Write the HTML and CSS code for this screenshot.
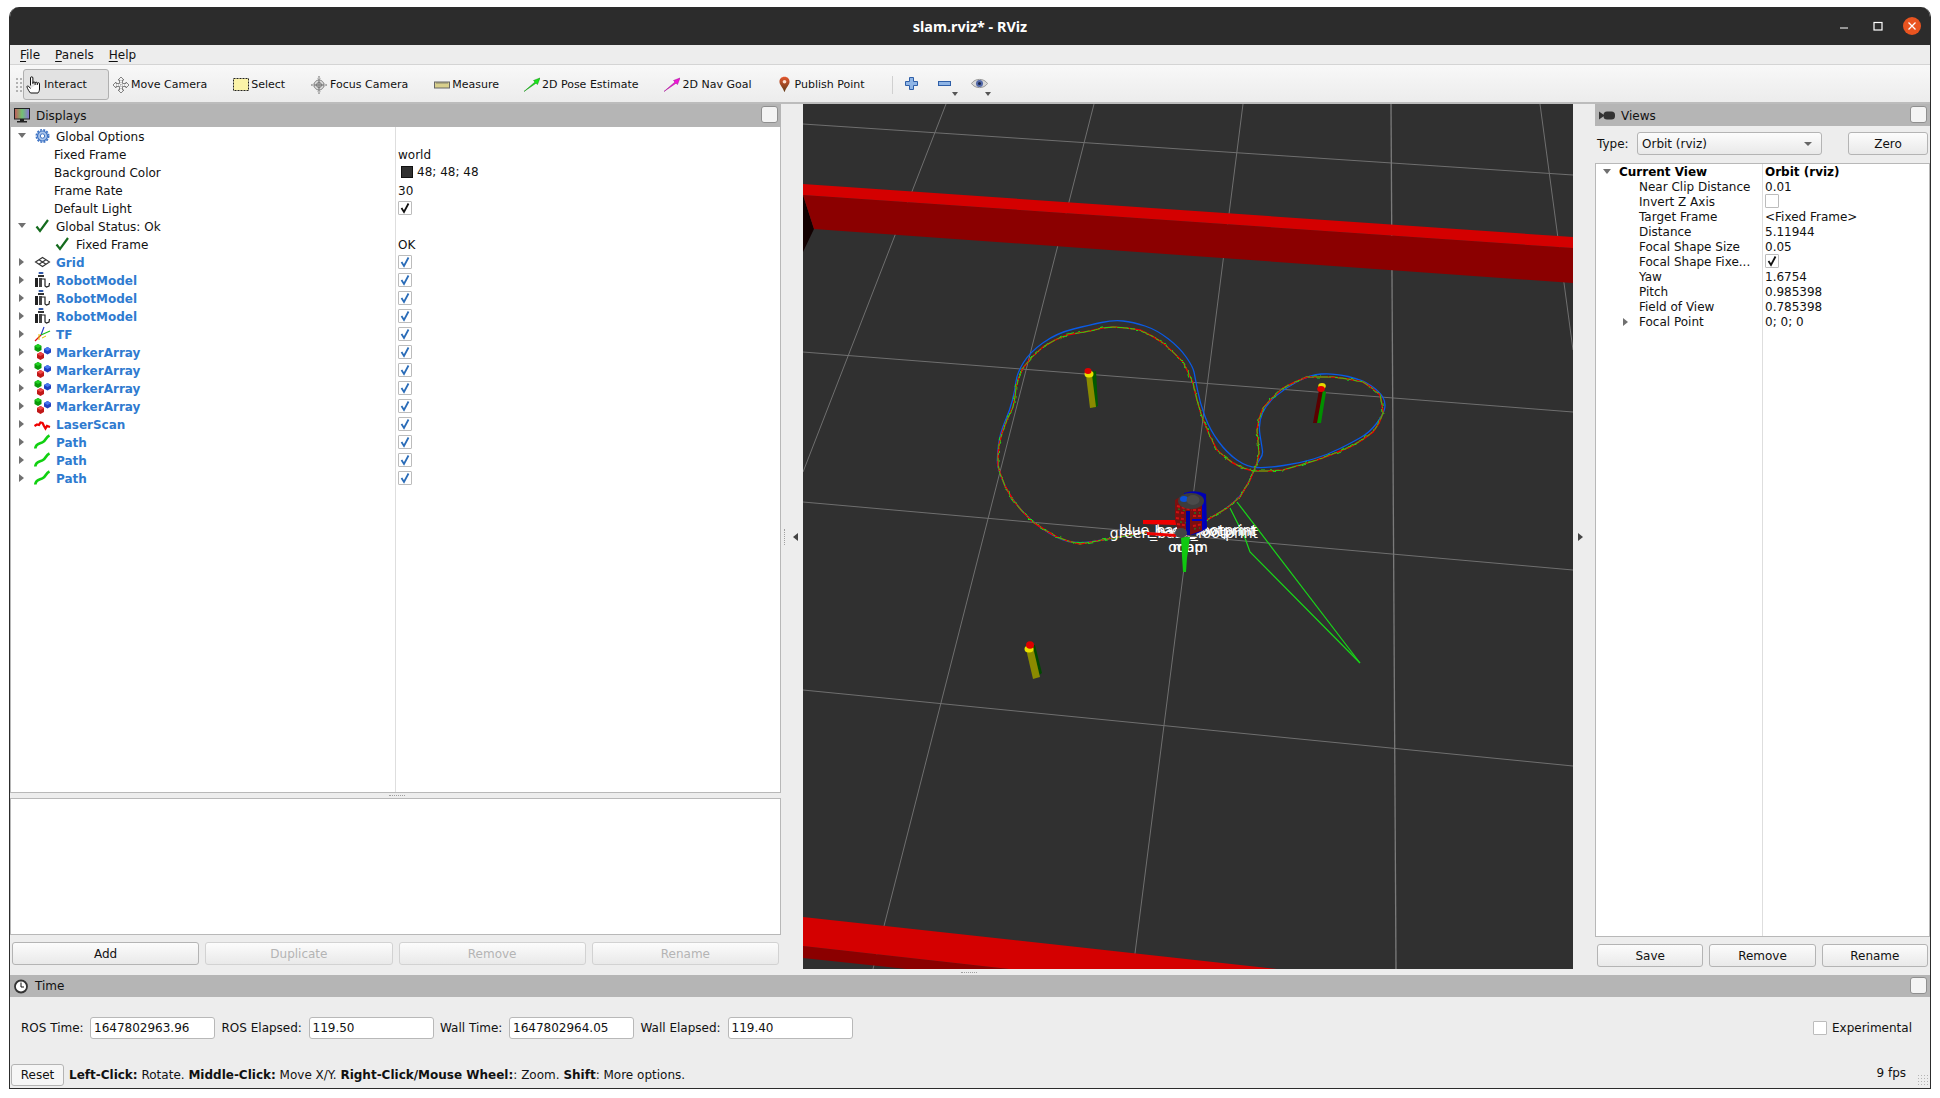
FILE: index.html
```html
<!DOCTYPE html>
<html lang="en">
<head>
<meta charset="utf-8">
<title>slam.rviz* - RViz</title>
<link rel="stylesheet" href="styles.css">
</head>
<body>
<svg class="defs" width="0" height="0" aria-hidden="true">
  <defs>
    <symbol id="i-gear" viewBox="0 0 17 14">
      <circle cx="8.5" cy="7" r="5" fill="#a9c4ea" stroke="#3f74c4" stroke-width="1.2"/>
      <circle cx="8.5" cy="7" r="6.2" fill="none" stroke="#3f74c4" stroke-width="1.6" stroke-dasharray="2 1.25"/>
      <circle cx="8.5" cy="7" r="2.2" fill="#fff" stroke="#3f74c4"/>
    </symbol>
    <symbol id="i-ok" viewBox="0 0 17 14">
      <path d="M2.5 7.5 L6 12 L14 1" fill="none" stroke="#156b1e" stroke-width="2.2"/>
    </symbol>
    <symbol id="i-grid" viewBox="0 0 17 14">
      <path d="M1.5 7 L8.5 2.5 L15.5 7 L8.5 11.5Z M5 4.8 L12 9.2 M12 4.8 L5 9.2" fill="#fff" stroke="#333" stroke-width="1.1"/>
    </symbol>
    <symbol id="i-robot" viewBox="0 0 17 16">
      <rect x="4.5" y="0" width="5" height="2" rx="1" fill="#3058a8"/>
      <rect x="4" y="3" width="6" height="2" fill="#333"/>
      <rect x="1" y="6" width="3" height="9" fill="#222"/>
      <rect x="5" y="6" width="3" height="9" fill="#444"/>
      <path d="M8 7 L11 7 L11 14 L12.5 15 L15 14 L15.5 11" fill="none" stroke="#222" stroke-width="1.2"/>
    </symbol>
    <symbol id="i-tf" viewBox="0 0 17 16">
      <path d="M7 9 L10 1" stroke="#2238c8" stroke-width="1.2" fill="none"/>
      <path d="M7 9 L16 5" stroke="#18c018" stroke-width="1.2" fill="none"/>
      <path d="M7 9 L1 15" stroke="#e01010" stroke-width="1.3" fill="none"/>
      <path d="M5 8 L5 14 M8 12 L12 10" stroke="#e0c000" stroke-width="1" fill="none"/>
    </symbol>
    <symbol id="i-marker" viewBox="0 0 17 16">
      <path d="M4 0 L7.5 2 V6 L4 8 L.5 6 V2Z" fill="#0a9a0a"/><path d="M.5 2 L4 0 L7.5 2 L4 4Z" fill="#22d022"/>
      <path d="M13.5 3 L17 5 V8.5 L13.5 10.5 L10 8.5 V5Z" fill="#2040c0"/><path d="M10 5 L13.5 3 L17 5 L13.5 7Z" fill="#4a78f0"/>
      <path d="M6.500 8 L10 10 V14 L6.500 16 L3 14 V10Z" fill="#c01818"/><path d="M3 10 L6.500 8 L10 10 L6.500 12Z" fill="#f04848"/>
    </symbol>
    <symbol id="i-laser" viewBox="0 0 17 14">
      <path d="M.5 9 L3 7.500 L5 8 L6.500 5.500 L8.500 6 L10 9 L11.500 11.500 L13 9 L16 10" fill="none" stroke="#ee0000" stroke-width="2.300"/>
    </symbol>
    <symbol id="i-path" viewBox="0 0 17 16">
      <path d="M1.300 14.500 C1.800 9 6 10 9 8 C12 6 12 3 15.500 1.500" fill="none" stroke="#10d010" stroke-width="2.700"/>
    </symbol>
    <symbol id="i-check" viewBox="0 0 12 12">
      <path d="M2.500 6 L5 10 L9.500 1.500" fill="none" stroke="currentColor" stroke-width="1.800"/>
    </symbol>
    <linearGradient id="g-screen" x1="0" x2="1" y1="0" y2="0">
      <stop offset="0" stop-color="#c65a5a"/><stop offset=".5" stop-color="#72c272"/><stop offset="1" stop-color="#8a74d6"/>
    </linearGradient>
    <linearGradient id="g-pin" x1="0" x2="0" y1="0" y2="1">
      <stop offset="0" stop-color="#e4572e"/><stop offset="1" stop-color="#5d3a18"/>
    </linearGradient>
    <filter id="jag" filterUnits="userSpaceOnUse" x="960" y="280" width="460" height="300">
      <feTurbulence type="fractalNoise" baseFrequency="0.22" numOctaves="1" seed="4"/>
      <feDisplacementMap in="SourceGraphic" scale="5" xChannelSelector="R" yChannelSelector="G"/>
    </filter>
    <path id="gt" d="M1147 532 L1113 538 L1097 541 L1080 544 L1068 541 L1057 537 L1045 530 L1033 522 L1022 511 L1013 500 L1005 486 L1000 473 L998 465 L998 457 L999 445 L1002 433 L1007 420 L1013 407 L1015 397 L1016 387 L1019 377 L1023 368 L1032 357 L1043 347 L1055 340 L1067 335 L1078 333 L1090 331 L1102 328 L1113 327 L1127 328 L1140 330 L1152 336 L1163 343 L1173 352 L1183 362 L1188 372 L1193 383 L1197 400 L1202 417 L1209 434 L1217 450 L1225 457 L1233 463 L1243 468 L1253 471 L1268 471 L1283 470 L1300 465 L1317 460 L1333 454 L1350 447 L1362 440 L1373 432 L1379 423 L1383 413 L1382 404 L1380 395 L1372 388 L1363 382 L1348 379 L1333 377 L1320 377 L1307 377 L1295 382 L1283 388 L1272 398 L1263 408 L1259 419 L1257 430 L1258 442 L1259 453 L1257 463 L1250 480 L1240 497 L1227 508 L1207 520 L1200 524"/>
  </defs>
</svg>

<div class="window">
  <header class="titlebar">
    <span class="title">slam.rviz* - RViz</span>
    <div class="winctl">
      <svg class="ctl min" width="12" height="12" viewBox="0 0 12 12"><path d="M0 8 H8" stroke="#fff" stroke-width="1"/></svg>
      <svg class="ctl" width="12" height="12" viewBox="0 0 12 12"><rect x="1" y="2.500" width="8" height="7.500" fill="none" stroke="#fff" stroke-width="1.200"/></svg>
      <svg class="ctl" width="18" height="18" viewBox="0 0 18 18"><circle cx="9" cy="9" r="9" fill="#e95420"/><path d="M5.500 5.500 L12.500 12.500 M12.500 5.500 L5.500 12.500" stroke="#fff" stroke-width="1.300"/></svg>
    </div>
  </header>

  <nav class="menubar">
    <span class="menu"><u>F</u>ile</span>
    <span class="menu"><u>P</u>anels</span>
    <span class="menu"><u>H</u>elp</span>
  </nav>

  <div class="toolbar">
    <span class="handle"></span>
    <div class="tool active">
      <svg class="ti" viewBox="0 0 16 18"><path d="M4.500 9.500 V2 a1.200 1.200 0 0 1 2.400 0 V8 M6.900 7 a1.100 1.100 0 0 1 2.200 0 V9 M9.100 7.300 a1.100 1.100 0 0 1 2.200 0 V9 M11.300 7.800 a1.100 1.100 0 0 1 2.200 0 V13 c0 2 -.8 3 -1.500 4 H4.500 C3.500 16 1.500 13 1 11 c-.2 -1 .8 -1.500 1.500 -.8 L4.500 12.500" fill="#fff" stroke="#111" stroke-width="1"/></svg>
      <span>Interact</span>
    </div>
    <div class="tool">
      <svg class="ti" viewBox="0 0 16 18"><path d="M8 1 L11 4 H9.500 V7.500 H13 V6 L16 9 L13 12 V10.500 H9.500 V14 H11 L8 17 L5 14 H6.500 V10.500 H3 V12 L0 9 L3 6 V7.500 H6.500 V4 H5Z" fill="#f4f4f4" stroke="#666" stroke-width=".8"/><path d="M3 9 H13 M8 4 V14" stroke="#888" stroke-width=".8" stroke-dasharray="1 1"/></svg>
      <span>Move Camera</span>
    </div>
    <div class="tool">
      <svg class="ti" viewBox="0 0 16 18"><rect x=".5" y="2.500" width="15" height="12" fill="#fbf3a8" stroke="#222" stroke-dasharray="2 1"/></svg>
      <span>Select</span>
    </div>
    <div class="tool">
      <svg class="ti" viewBox="0 0 16 18"><circle cx="8" cy="9" r="5" fill="#ddd" stroke="#888"/><path d="M8 0 V18 M0 9 H16" stroke="#888" stroke-width="1.400"/><circle cx="8" cy="9" r="2.500" fill="none" stroke="#777"/><path d="M8 0 L10 3 H6Z M8 18 L10 15 H6Z M0 9 L3 7 V11Z M16 9 L13 7 V11Z" fill="#bbb"/></svg>
      <span class="sp">Focus Camera</span>
    </div>
    <div class="tool tight">
      <svg class="ti" viewBox="0 0 16 18"><rect x=".5" y="6" width="15" height="6" fill="#d8cf8c" stroke="#666"/><path d="M3 6 V8 M5 6 V8 M7 6 V8 M9 6 V8 M11 6 V8 M13 6 V8" stroke="#666" stroke-width=".7"/></svg>
      <span>Measure</span>
    </div>
    <div class="tool">
      <svg class="ti" viewBox="0 0 16 18"><path d="M0 15.500 L11 6 L9.500 4.500 L16 2 L13.500 8.500 L12 7.200 Z" fill="#19e619" stroke="#118a11" stroke-width=".5"/></svg>
      <span>2D Pose Estimate</span>
    </div>
    <div class="tool wide">
      <svg class="ti" viewBox="0 0 16 18"><path d="M0 15.500 L11 6 L9.500 4.500 L16 2 L13.500 8.500 L12 7.200 Z" fill="#f014d8" stroke="#a01090" stroke-width=".5"/></svg>
      <span>2D Nav Goal</span>
    </div>
    <div class="tool">
      <svg class="tp" viewBox="0 0 12 17"><path d="M6 0 C2.500 0 .5 2.500 .5 5.500 C.5 9 4 11 6 17 C8 11 11.500 9 11.500 5.500 C11.500 2.500 9.500 0 6 0Z" fill="url(#g-pin)"/><circle cx="6" cy="5.500" r="2" fill="#fbe0d0"/></svg>
      <span>Publish Point</span>
    </div>
    <span class="tsep"></span>
    <div class="vbtn">
      <svg width="13" height="13" viewBox="0 0 13 13"><path d="M4.500 .5 H8.500 V4.500 H12.500 V8.500 H8.500 V12.500 H4.500 V8.500 H.5 V4.500 H4.500Z" fill="#8fb5e6" stroke="#2f5fa8"/></svg>
    </div>
    <div class="vbtn">
      <svg width="13" height="13" viewBox="0 0 13 13"><rect x=".5" y="4.500" width="12" height="4" fill="#8fb5e6" stroke="#2f5fa8"/></svg>
      <i class="drop"></i>
    </div>
    <div class="vbtn">
      <svg width="17" height="13" viewBox="0 0 17 13"><path d="M.5 6.500 C4 1 13 1 16.500 6.500 C13 12 4 12 .5 6.500Z" fill="#d8d8d8" stroke="#999"/><circle cx="8.500" cy="6.500" r="3.500" fill="#5268a8"/><circle cx="8.500" cy="6.500" r="1.500" fill="#1c2848"/></svg>
      <i class="drop"></i>
    </div>
  </div>

  <div class="workspace">
    <section class="dock left">
      <div class="docktitle">
        <svg class="dicon" viewBox="0 0 16 15"><rect x=".5" y=".5" width="15" height="10.500" fill="url(#g-screen)" stroke="#222"/><path d="M6 11 H10 V13 H13 V14.500 H3 V13 H6Z" fill="#222"/></svg>
        <span>Displays</span>
        <span class="floatbox"></span>
      </div>
      <div class="tree displays">
        <div class="row"><div class="name"><i class="tw down"></i><svg class="ic"><use href="#i-gear"/></svg><span>Global Options</span></div><div class="val"></div></div>
        <div class="row"><div class="name child">Fixed Frame</div><div class="val">world</div></div>
        <div class="row"><div class="name child">Background Color</div><div class="val"><i class="swatch"></i><span class="up">48; 48; 48</span></div></div>
        <div class="row"><div class="name child">Frame Rate</div><div class="val">30</div></div>
        <div class="row"><div class="name child">Default Light</div><div class="val"><span class="cb"><svg class="ck"><use href="#i-check"/></svg></span></div></div>
        <div class="row"><div class="name"><i class="tw down"></i><svg class="ic"><use href="#i-ok"/></svg><span>Global Status: Ok</span></div><div class="val"></div></div>
        <div class="row"><div class="name child"><svg class="ic"><use href="#i-ok"/></svg><span>Fixed Frame</span></div><div class="val">OK</div></div>
        <div class="row on"><div class="name"><i class="tw"></i><svg class="ic"><use href="#i-grid"/></svg><span>Grid</span></div><div class="val"><span class="cb"><svg class="ck"><use href="#i-check"/></svg></span></div></div>
        <div class="row on"><div class="name"><i class="tw"></i><svg class="ic"><use href="#i-robot"/></svg><span>RobotModel</span></div><div class="val"><span class="cb"><svg class="ck"><use href="#i-check"/></svg></span></div></div>
        <div class="row on"><div class="name"><i class="tw"></i><svg class="ic"><use href="#i-robot"/></svg><span>RobotModel</span></div><div class="val"><span class="cb"><svg class="ck"><use href="#i-check"/></svg></span></div></div>
        <div class="row on"><div class="name"><i class="tw"></i><svg class="ic"><use href="#i-robot"/></svg><span>RobotModel</span></div><div class="val"><span class="cb"><svg class="ck"><use href="#i-check"/></svg></span></div></div>
        <div class="row on"><div class="name"><i class="tw"></i><svg class="ic"><use href="#i-tf"/></svg><span>TF</span></div><div class="val"><span class="cb"><svg class="ck"><use href="#i-check"/></svg></span></div></div>
        <div class="row on"><div class="name"><i class="tw"></i><svg class="ic"><use href="#i-marker"/></svg><span>MarkerArray</span></div><div class="val"><span class="cb"><svg class="ck"><use href="#i-check"/></svg></span></div></div>
        <div class="row on"><div class="name"><i class="tw"></i><svg class="ic"><use href="#i-marker"/></svg><span>MarkerArray</span></div><div class="val"><span class="cb"><svg class="ck"><use href="#i-check"/></svg></span></div></div>
        <div class="row on"><div class="name"><i class="tw"></i><svg class="ic"><use href="#i-marker"/></svg><span>MarkerArray</span></div><div class="val"><span class="cb"><svg class="ck"><use href="#i-check"/></svg></span></div></div>
        <div class="row on"><div class="name"><i class="tw"></i><svg class="ic"><use href="#i-marker"/></svg><span>MarkerArray</span></div><div class="val"><span class="cb"><svg class="ck"><use href="#i-check"/></svg></span></div></div>
        <div class="row on"><div class="name"><i class="tw"></i><svg class="ic"><use href="#i-laser"/></svg><span>LaserScan</span></div><div class="val"><span class="cb"><svg class="ck"><use href="#i-check"/></svg></span></div></div>
        <div class="row on"><div class="name"><i class="tw"></i><svg class="ic"><use href="#i-path"/></svg><span>Path</span></div><div class="val"><span class="cb"><svg class="ck"><use href="#i-check"/></svg></span></div></div>
        <div class="row on"><div class="name"><i class="tw"></i><svg class="ic"><use href="#i-path"/></svg><span>Path</span></div><div class="val"><span class="cb"><svg class="ck"><use href="#i-check"/></svg></span></div></div>
        <div class="row on"><div class="name"><i class="tw"></i><svg class="ic"><use href="#i-path"/></svg><span>Path</span></div><div class="val"><span class="cb"><svg class="ck"><use href="#i-check"/></svg></span></div></div>
      </div>
      <div class="vsplit"><i class="dots"></i></div>
      <div class="desc"></div>
      <div class="btnrow">
        <button class="btn">Add</button>
        <button class="btn off">Duplicate</button>
        <button class="btn off">Remove</button>
        <button class="btn off">Rename</button>
      </div>
    </section>

    <div class="hsplit l"><i class="grip"></i><i class="larr"></i></div>

    <div class="scenecol">
      <svg class="scene" width="770" height="865" viewBox="803 104 770 865">
        <rect x="803" y="104" width="770" height="865" fill="#303030"/>
        <g fill="none" stroke="#6f6f6f" stroke-width="1">
          <path d="M803 124 L1573 175"/>
          <path d="M803 352 L1573 412"/>
          <path d="M803 502 L1573 570"/>
          <path d="M803 690 L1573 766"/>
          <path d="M946 104 L803 472"/>
          <path d="M1094 104 L873 969"/>
          <path d="M1243 104 L1133 969"/>
          <path d="M1540 104 L1573 350"/>
          <path d="M1391 104 L1396 969" stroke="#7a7a7a" stroke-width="1.300"/>
        </g>
        <polygon points="803,195 814,229 803,252" fill="#120000"/>
        <polygon points="803,195 1573,248 1573,283 814,229" fill="#8b0000"/>
        <polygon points="803,184 1573,237 1573,248 803,195" fill="#d40000"/>
        <polygon points="803,946 1009,969 907,969 803,958" fill="#8b0000"/>
        <polygon points="803,917 1277,969 1009,969 803,946" fill="#d40000"/>

        <g class="traj">
          <path stroke="#0a5ae6" d="M1147 532 Q1113 538 1096.500 541 Q1080 544 1068.500 541.500 Q1057 539 1043.500 529.500 Q1030 520 1020 508.500 Q1010 497 1004 483.500 Q998 470 997.500 463.500 Q997 457 998.500 445 Q1000 433 1005 421.500 Q1010 410 1012.500 400 Q1015 390 1016 381.500 Q1017 373 1023.500 362.500 Q1030 352 1043.500 342.500 Q1057 333 1073.500 329 Q1090 325 1101.500 322.500 Q1113 320 1123 321 Q1133 322 1145 326 Q1157 330 1168.500 339 Q1180 348 1186.500 357.500 Q1193 367 1194 372 Q1195 377 1197.500 390 Q1200 403 1205 416.500 Q1210 430 1218.500 441.500 Q1227 453 1237 460 Q1247 467 1257 467.500 Q1267 468 1283.500 465.500 Q1300 463 1313.500 459 Q1327 455 1340 448.500 Q1353 442 1361.500 437 Q1370 432 1376.500 423.500 Q1383 415 1384.500 409 Q1386 403 1383 397.500 Q1380 392 1371.500 386 Q1363 380 1348 376.500 Q1333 373 1321.500 374 Q1310 375 1298.500 381 Q1287 387 1277 395 Q1267 403 1262.500 413 Q1258 423 1260 435 Q1262 447 1262.500 451 Q1263 455 1260 459 Q1257 463 1253.500 471.500 Q1250 480 1245 488.500 Q1240 497 1233.500 502.500 Q1227 508 1217 514 Q1207 520 1200 524"/>
          <use href="#gt" class="redline" stroke="#ee0000"/>
          <use href="#gt" class="greenline" stroke="#18e018" filter="url(#jag)"/>
        </g>
        <g fill="none" stroke="#18d818" stroke-width="1.200">
          <path d="M1237 502 L1360 663"/>
          <path d="M1230 508 L1237 522 L1245 538 L1250 552 L1360 663"/>
        </g>

        <g>
          <polygon points="1090,372 1096,371 1098,406 1093,408" fill="#005a00"/>
          <polygon points="1086,375 1092,375 1096,407 1090,408" fill="#8a8a00"/>
          <ellipse cx="1089" cy="374" rx="4.500" ry="3.500" fill="#e8e000"/>
          <ellipse cx="1088" cy="371" rx="3.500" ry="3" fill="#dd0000"/>
        </g>
        <g>
          <polygon points="1322,390 1326,392 1321,423 1316,423" fill="#009000"/>
          <polygon points="1319,390 1323,390 1317,423 1313,423" fill="#5a0000"/>
          <ellipse cx="1322" cy="386" rx="3.800" ry="3" fill="#e8d800"/>
          <ellipse cx="1321" cy="389" rx="3.800" ry="3" fill="#dd0000"/>
        </g>
        <g>
          <polygon points="1032,645 1035,645 1042,673 1038,676" fill="#004800"/>
          <polygon points="1026,649 1033,647 1040,677 1033,679" fill="#8a8a00"/>
          <ellipse cx="1029" cy="649" rx="4.500" ry="3.500" fill="#e8e000"/>
          <ellipse cx="1030" cy="645" rx="4" ry="3.800" fill="#dd0000"/>
        </g>

        <g class="labels">
          <text x="1184" y="538">green_base_footprint</text>
          <text x="1188" y="535">blue_base_footprint</text>
          <text x="1205" y="536">base_footprint</text>
          <text x="1188" y="552">odom</text>
          <text x="1188" y="552">map</text>
        </g>

        <g>
          <polygon points="1143,520 1176,520 1176,525 1143,524" fill="#ee0000"/>
          <polygon points="1147,532 1176,534 1176,537 1147,535" fill="#ee0000"/>
          <polygon points="1181,537 1190,537 1187,558 1186,572 1183,572 1182,556" fill="#10c810"/>
          <path d="M1184 493 Q1195 489 1206 494 L1207 528 Q1196 536 1187 535Z" fill="#0000b4"/>
          <path d="M1175 500 Q1178 497 1184 497 L1203 504 L1203 530 L1190 535 L1178 532 L1175 520Z" fill="#7a1010"/>
          <path d="M1177 506 L1192 510 M1176 512 L1190 514 M1176 518 L1190 520 M1177 524 L1190 526 M1178 529 L1188 531 M1193 510 L1202 510 M1193 516 L1203 516 M1193 526 L1203 524" stroke="#d01010" stroke-width="2" stroke-dasharray="3 2" fill="none"/>
          <path d="M1178 509 L1186 511 M1180 522 L1188 523 M1194 513 L1200 513 M1194 529 L1200 528" stroke="#2a7020" stroke-width="1.300" stroke-dasharray="2 3" fill="none"/>
          <path d="M1192 520 L1205 520 M1203 503 L1203 530" stroke="#0000c0" stroke-width="2" fill="none"/>
          <rect x="1186" y="511" width="4" height="24" fill="#0000a0"/>
          <ellipse cx="1191" cy="501" rx="13" ry="8" fill="#3c3c3c"/>
          <ellipse cx="1184" cy="499" rx="4" ry="3" fill="#0a50d8"/>
          <ellipse cx="1193" cy="500" rx="6.500" ry="5" fill="#4a4a4a"/>
          <ellipse cx="1181" cy="533" rx="6" ry="5" fill="#444"/>
        </g>
      </svg>
      <div class="botsplit"><i class="dots"></i></div>
    </div>

    <div class="hsplit r"><i class="rarr"></i></div>

    <section class="dock right">
      <div class="docktitle vt">
        <svg class="dicon" viewBox="0 0 16 15"><path d="M0 3.500 L5 7 V8 L0 11.500Z" fill="#333"/><rect x="4.500" y="3.500" width="11.500" height="8" rx="3.500" fill="#333"/></svg>
        <span>Views</span>
        <span class="floatbox"></span>
      </div>
      <div class="typerow">
        <span class="tlabel">Type:</span>
        <div class="combo"><span>Orbit (rviz)</span><i class="cdrop"></i></div>
        <button class="btn zero">Zero</button>
      </div>
      <div class="tree views">
        <div class="vrow b"><div class="vname"><i class="tw down"></i><span>Current View</span></div><div class="vval">Orbit (rviz)</div></div>
        <div class="vrow"><div class="vname kid">Near Clip Distance</div><div class="vval">0.01</div></div>
        <div class="vrow"><div class="vname kid">Invert Z Axis</div><div class="vval"><span class="cb"></span></div></div>
        <div class="vrow"><div class="vname kid">Target Frame</div><div class="vval">&lt;Fixed Frame&gt;</div></div>
        <div class="vrow"><div class="vname kid">Distance</div><div class="vval">5.11944</div></div>
        <div class="vrow"><div class="vname kid">Focal Shape Size</div><div class="vval">0.05</div></div>
        <div class="vrow"><div class="vname kid">Focal Shape Fixe...</div><div class="vval"><span class="cb"><svg class="ck"><use href="#i-check"/></svg></span></div></div>
        <div class="vrow"><div class="vname kid">Yaw</div><div class="vval">1.6754</div></div>
        <div class="vrow"><div class="vname kid">Pitch</div><div class="vval">0.985398</div></div>
        <div class="vrow"><div class="vname kid">Field of View</div><div class="vval">0.785398</div></div>
        <div class="vrow"><div class="vname deep"><i class="tw"></i><span>Focal Point</span></div><div class="vval">0; 0; 0</div></div>
      </div>
      <div class="btnrow">
        <button class="btn">Save</button>
        <button class="btn">Remove</button>
        <button class="btn">Rename</button>
      </div>
    </section>
  </div>

  <section class="timepanel">
    <div class="docktitle time">
      <svg class="clock" viewBox="0 0 14 15"><circle cx="7" cy="7.500" r="6" fill="#fff" stroke="#333" stroke-width="1.800"/><path d="M7 3.500 V8 H10" fill="none" stroke="#111" stroke-width="1"/></svg>
      <span>Time</span>
      <span class="floatbox"></span>
    </div>
    <div class="timerow">
      <div class="tf"><span class="lbl short">ROS Time:</span><span class="field">1647802963.96</span></div>
      <div class="tf"><span class="lbl long">ROS Elapsed:</span><span class="field">119.50</span></div>
      <div class="tf"><span class="lbl short">Wall Time:</span><span class="field">1647802964.05</span></div>
      <div class="tf"><span class="lbl long">Wall Elapsed:</span><span class="field">119.40</span></div>
      <label class="exp"><span class="cb"></span>Experimental</label>
    </div>
    <div class="hintrow">
      <button class="btn reset">Reset</button>
      <p class="hint"><b>Left-Click:</b> Rotate. <b>Middle-Click:</b> Move X/Y. <b>Right-Click/Mouse Wheel:</b>: Zoom. <b>Shift</b>: More options.</p>
      <span class="fps">9 fps</span>
    </div>
    <i class="sizegrip"></i>
  </section>
</div>
</body>
</html>
```

FILE: styles.css
```css
* { box-sizing: border-box; }
html, body { margin: 0; padding: 0; background: #fff; }
body { font-family: "DejaVu Sans", sans-serif; font-size: 12px; color: #111; overflow: hidden; }
.defs { position: absolute; }
i { display: block; font-style: normal; }

.window {
  position: relative;
  width: 1922px;
  height: 1082px;
  margin: 7px 0 0 9px;
  display: flex;
  flex-direction: column;
  background: #ededed;
  border-left: 1px solid #2c2c2c;
  border-right: 1px solid #2c2c2c;
  border-bottom: 1px solid #2c2c2c;
  border-radius: 10px 10px 0 0;
  overflow: hidden;
}

.titlebar {
  height: 38px;
  flex: none;
  background: #2c2c2c;
  display: flex;
  align-items: center;
  justify-content: center;
  position: relative;
}
.title { color: #fff; font-family: "Noto Sans", sans-serif; font-weight: 700; font-size: 14.4px; }
.winctl { position: absolute; right: 9px; top: 10px; display: flex; align-items: center; gap: 18px; }
.ctl { display: block; }
.ctl.min { margin-right: 3px; }

.menubar {
  height: 20px;
  flex: none;
  display: flex;
  align-items: center;
  gap: 15px;
  padding-left: 10px;
  border-bottom: 1px solid #d4d4d4;
  background: #ededed;
}
.menu u { text-underline-offset: 2px; }

.toolbar {
  height: 39px;
  flex: none;
  display: flex;
  align-items: center;
  padding: 2px 0 0 5px;
  font-size: 11px;
  background: linear-gradient(#f8f8f8, #ececec);
  border-bottom: 2px solid #bcbcbc;
}
.handle { width: 8px; height: 16px; padding: 0; background: radial-gradient(circle, #b0b0b0 .7px, transparent 1px) 0 0 / 4px 4px; }
.tool { height: 31px; display: flex; align-items: center; gap: 2px; padding: 0 22px 0 4px; }
.tool.tight { padding-right: 21px; }
.tool.wide { padding-right: 24px; }
.tool.active { width: 86px; padding: 0 20px 0 2px; background: #e2e2e2; border: 1px solid #b0b0b0; border-radius: 3px; }
.ti { width: 16px; height: 18px; display: block; flex: none; }
.tp { width: 11px; height: 17px; display: block; flex: none; margin-right: 2px; }
.sp { margin-left: 1px; }
.tsep { width: 1px; height: 18px; margin-left: 5px; margin-right: 7px; background: #d0d0d0; }
.vbtn { width: 33px; height: 28px; display: flex; align-items: center; position: relative; padding-left: 5px; margin-bottom: 2px; }
.drop { position: absolute; right: 8px; bottom: 2px; border: 3px solid transparent; border-top: 4px solid #555; border-bottom: 0; }

.workspace { height: 871px; flex: none; display: flex; }
.dock { display: flex; flex-direction: column; height: 871px; flex: none; }
.dock.left { width: 771px; }
.dock.right { width: 335px; }

.docktitle {
  height: 23px;
  flex: none;
  background: #b5b5b5;
  display: flex;
  align-items: center;
  padding-left: 4px;
  position: relative;
}
.docktitle.vt { height: 22px; padding-top: 1px; }
.docktitle.time { height: 22px; }
.dicon { width: 16px; height: 15px; display: block; margin-right: 6px; }
.clock { width: 14px; height: 15px; display: block; margin-right: 7px; }
.floatbox {
  position: absolute;
  right: 3px;
  top: 2px;
  width: 17px;
  height: 17px;
  background: #f4f4f4;
  border: 1px solid #8f8f8f;
  border-radius: 3px;
}

.tree { background-color: #fff; border: 1px solid #b8b8b8; }
.tree.displays {
  height: 666px;
  flex: none;
  border-top: 0;
  background-image: linear-gradient(#dedede, #dedede);
  background-repeat: no-repeat;
  background-size: 1px 100%;
  background-position: 384px 0;
}
.tree.views {
  height: 774px;
  flex: none;
  background-image: linear-gradient(#dedede, #dedede);
  background-repeat: no-repeat;
  background-size: 1px 100%;
  background-position: 166px 0;
}

.row { height: 18px; display: flex; align-items: center; }
.name { width: 384px; height: 18px; padding: 2px 0 0 7px; flex: none; display: flex; align-items: center; }
.name.child { padding-left: 43px; }
.val { padding: 2px 0 0 3px; display: flex; align-items: center; flex: 1; height: 18px; }
.val .cb { margin-top: -2px; }
.row.on .name span { color: #2f7bd0; font-weight: 700; }
.row.on .ck { color: #2a6cb8; }
.ic { width: 17px; height: 16px; margin: -2px 5px 0 0; flex: none; display: block; }
.name .tw { margin-top: -2px; }

.tw { width: 16px; height: 8px; flex: none; position: relative; }
.tw::before {
  content: "";
  position: absolute;
  left: 1px;
  top: 0;
  border-left: 5px solid #707070;
  border-top: 4px solid transparent;
  border-bottom: 4px solid transparent;
}
.tw.down::before {
  left: 0;
  top: 1px;
  border-top: 5px solid #707070;
  border-left: 4px solid transparent;
  border-right: 4px solid transparent;
  border-bottom: 0;
}

.cb {
  width: 14px;
  height: 14px;
  flex: none;
  display: flex;
  align-items: center;
  justify-content: center;
  background: #fff;
  border: 1px solid #bcbcbc;
  border-radius: 1px;
}
.ck { width: 12px; height: 12px; display: block; color: #111; }
.swatch { width: 12px; height: 12px; margin: 0 4px 2px 3px; background: #303030; border: 1px solid #111; }
.up { margin-top: -2px; }

.vsplit { height: 5px; flex: none; display: flex; justify-content: center; align-items: center; padding-left: 2px; }
.dots { width: 16px; height: 1px; border-top: 1px dotted #a0a0a0; }
.desc { height: 137px; flex: none; background: #fff; border: 1px solid #b8b8b8; }

.btnrow { display: flex; gap: 6px; padding: 7px 2px 0; flex: none; }
.btn {
  flex: 1 1 0;
  height: 23px;
  padding: 0;
  font: inherit;
  color: #111;
  background: linear-gradient(#fcfcfc, #e9e9e9);
  border: 1px solid #b4b4b4;
  border-radius: 3px;
}
.btn.off { color: #b4b4b4; border-color: #d2d2d2; }

.hsplit { width: 22px; height: 865px; flex: none; display: flex; align-items: center; }
.hsplit.l { padding-left: 3px; gap: 8px; }
.hsplit.r { padding-left: 5px; }
.grip { height: 16px; width: 1px; border-left: 1px dotted #a0a0a0; }
.larr { border-right: 5px solid #444; border-top: 4px solid transparent; border-bottom: 4px solid transparent; }
.rarr { border-left: 5px solid #444; border-top: 4px solid transparent; border-bottom: 4px solid transparent; }

.scenecol { width: 770px; flex: none; display: flex; flex-direction: column; }
.scene { display: block; flex: none; }
.botsplit { height: 6px; display: flex; align-items: center; padding-left: 158px; }

.traj { fill: none; stroke-width: 1.3; stroke-linejoin: round; }
.redline { stroke-width: 1.6; }
.greenline { stroke-width: 1; }
.labels text { fill: #fff; font-family: "DejaVu Sans", sans-serif; font-size: 14px; text-anchor: middle; }

.typerow { display: flex; align-items: center; height: 23px; margin-top: 6px; padding: 0 2px; flex: none; }
.tlabel { width: 40px; flex: none; }
.combo {
  width: 185px;
  height: 23px;
  flex: none;
  display: flex;
  align-items: center;
  justify-content: space-between;
  padding: 0 9px 0 4px;
  background: linear-gradient(#fcfcfc, #e9e9e9);
  border: 1px solid #b4b4b4;
  border-radius: 3px;
}
.cdrop { border-top: 4px solid #666; border-left: 4px solid transparent; border-right: 4px solid transparent; }
.btn.zero { flex: none; width: 80px; margin-left: 26px; }
.dock.right .tree { margin-top: 8px; }

.vrow { height: 15px; display: flex; align-items: center; }
.vname { width: 166px; flex: none; display: flex; align-items: center; padding-left: 7px; white-space: nowrap; }
.vname .tw { width: 16px; }
.vname.kid { padding-left: 43px; }
.vname.deep { padding-left: 26px; }
.vname.deep .tw { width: 17px; }
.vval { padding-left: 3px; display: flex; align-items: center; }
.vrow.b { font-weight: 700; color: #000; }
.vrow .cb { margin-top: -1px; }

.timepanel { height: 112px; flex: none; position: relative; display: flex; flex-direction: column; }
.timerow { height: 22px; margin-top: 20px; padding-left: 11px; padding-right: 18px; display: flex; align-items: center; gap: 6.5px; flex: none; }
.tf { display: flex; align-items: center; }
.lbl { flex: none; white-space: nowrap; }
.lbl.short { width: 69px; }
.lbl.long { width: 87px; }
.field {
  width: 125px;
  height: 22px;
  padding-left: 3px;
  display: flex;
  align-items: center;
  background: #fff;
  border: 1px solid #b8b8b8;
  border-radius: 3px;
}
.exp { margin-left: auto; display: flex; align-items: center; gap: 5px; }
.hintrow { height: 22px; margin-top: 25px; padding-left: 1px; padding-right: 24px; display: flex; align-items: center; flex: none; }
.btn.reset { flex: none; width: 53px; height: 22px; background: #f6f6f6; }
.hint { margin: 0 0 0 5px; flex: 1; }
.fps { margin-bottom: 4px; }
.sizegrip {
  position: absolute;
  right: 1px;
  bottom: 1px;
  width: 12px;
  height: 12px;
  background: radial-gradient(circle, #b4b4b4 .7px, transparent 1px) 0 0 / 3px 3px;
}
```
